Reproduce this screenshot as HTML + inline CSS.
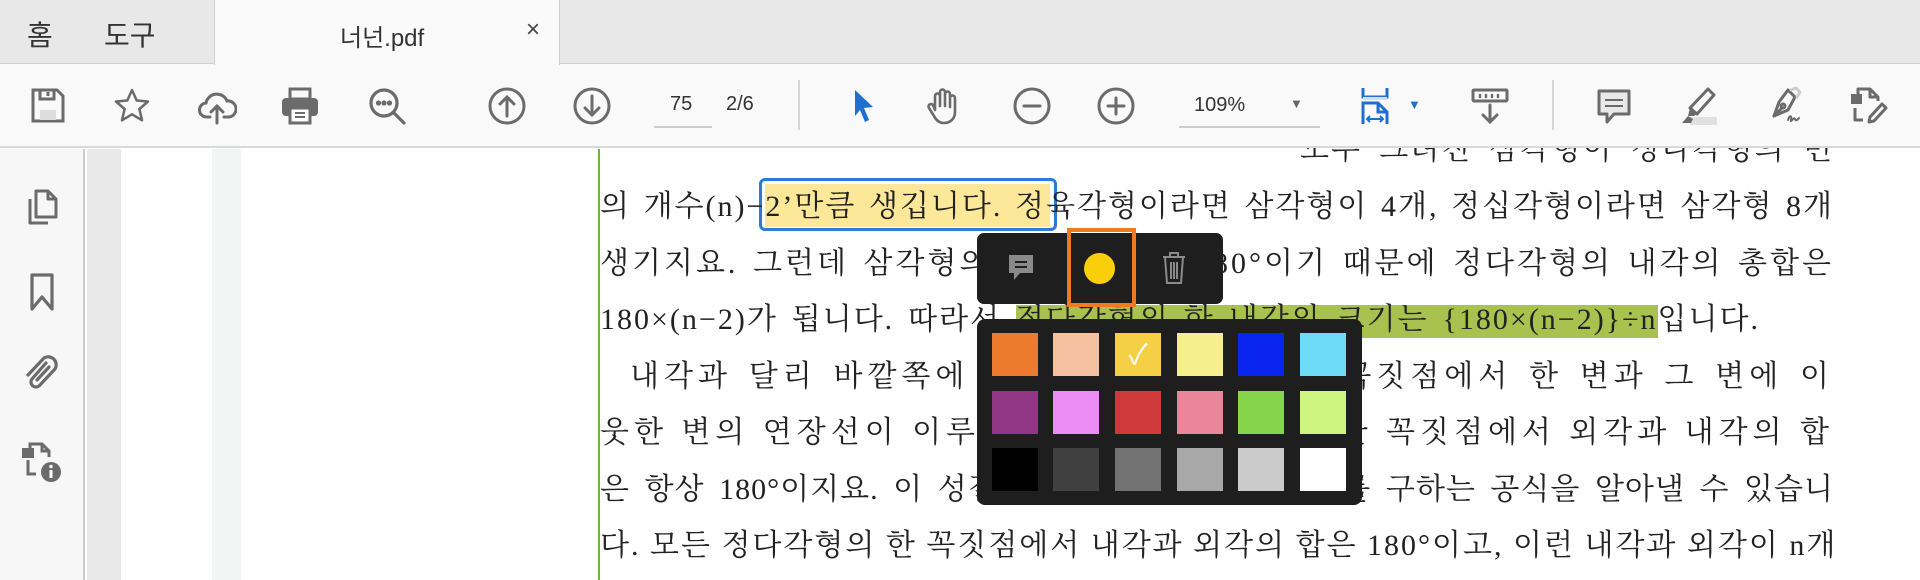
<!DOCTYPE html>
<html><head><meta charset="utf-8">
<style>
*{margin:0;padding:0;box-sizing:border-box}
body{width:1920px;height:580px;overflow:hidden;background:#fff;position:relative;font-family:"Liberation Sans","Noto Sans CJK KR",sans-serif}
.abs{position:absolute}
#tabs{left:0;top:0;width:1920px;height:64px;background:#e8e8e8;border-bottom:1px solid #cfcfcf;z-index:5}
#tb{left:0;top:64px;width:1920px;height:84px;background:#f9f9f9;border-bottom:2px solid #d9d9d9;z-index:5}
.z{z-index:6}
.ic{position:absolute;top:86px;width:40px;height:40px;z-index:6}
.ic svg{width:40px;height:40px}
.line{position:absolute;left:600px;width:1234px;white-space:nowrap;font-family:"Liberation Serif","Noto Serif CJK KR","Noto Serif CJK SC",serif;font-size:30px;color:#222;line-height:40px;text-align:justify;text-align-last:justify;letter-spacing:5px}
.sw{position:absolute;width:46px;height:43px}
</style></head><body>
<div id="tabs" class="abs"></div>
<div class="abs z" style="left:214px;top:0;width:346px;height:65px;background:#fafafa;border-left:1px solid #d0d0d0;border-right:1px solid #d0d0d0"></div>
<div class="abs z" style="left:27px;top:14px;font-size:28px;color:#333">홈</div>
<div class="abs z" style="left:104px;top:14px;font-size:28px;color:#333">도구</div>
<div class="abs z" style="left:340px;top:18px;font-size:24px;color:#333">너넌.pdf</div>
<div class="abs z" style="left:526px;top:16px;font-size:24px;color:#444">×</div>

<div id="tb" class="abs"></div>
<div class="ic" style="left:28px"><svg viewBox="0 0 40 40" fill="none" stroke="#6b6b6b" stroke-width="3"><path d="M5 4h24l6 6v25H5z"/><rect x="12" y="24" width="16" height="10" fill="#ddd" stroke="none"/><path d="M12 4v9h14V4M20 6v4"/></svg></div>
<div class="ic" style="left:112px"><svg viewBox="0 0 40 40" fill="none" stroke="#6b6b6b" stroke-width="2.5" stroke-linejoin="round"><path d="M20 4l4.7 10.5 11.3 1-8.6 7.5 2.6 11.3L20 28.3l-10 6 2.6-11.3L4 15.5l11.3-1z"/></svg></div>
<div class="ic" style="left:197px"><svg viewBox="0 0 40 40" fill="none" stroke="#6b6b6b" stroke-width="3" stroke-linecap="round"><path d="M13 31H10a7 7 0 0 1-1-14 11 11 0 0 1 21-2 7 7 0 0 1 2 16h-5"/><path d="M20 37V20M14 26l6-6 6 6"/></svg></div>
<div class="ic" style="left:280px"><svg viewBox="0 0 40 40"><rect x="10" y="3" width="20" height="10" fill="none" stroke="#6b6b6b" stroke-width="3"/><rect x="2" y="12" width="36" height="18" rx="4" fill="#6b6b6b"/><rect x="10" y="22" width="20" height="15" fill="#fff" stroke="#6b6b6b" stroke-width="3"/><path d="M15 27h10M15 31h10" stroke="#6b6b6b" stroke-width="2"/></svg></div>
<div class="ic" style="left:367px"><svg viewBox="0 0 40 40" fill="none" stroke="#6b6b6b" stroke-width="3.2" stroke-linecap="round"><circle cx="17" cy="17" r="13"/><path d="M27 27l10 10"/><circle cx="11.5" cy="17" r="1" fill="#6b6b6b"/><circle cx="17" cy="17" r="1" fill="#6b6b6b"/><circle cx="22.5" cy="17" r="1" fill="#6b6b6b"/></svg></div>
<div class="ic" style="left:487px"><svg viewBox="0 0 40 40" fill="none" stroke="#6b6b6b" stroke-width="3" stroke-linecap="round"><circle cx="20" cy="20" r="17"/><path d="M20 30V11M13 18l7-7 7 7"/></svg></div>
<div class="ic" style="left:572px"><svg viewBox="0 0 40 40" fill="none" stroke="#6b6b6b" stroke-width="3" stroke-linecap="round"><circle cx="20" cy="20" r="17"/><path d="M20 10v19M13 22l7 7 7-7"/></svg></div>
<div class="abs z" style="left:670px;top:93px;font-size:20px;color:#333">75</div>
<div class="abs z" style="left:654px;top:126px;width:58px;height:2px;background:#ccc"></div>
<div class="abs z" style="left:726px;top:93px;font-size:20px;color:#333">2/6</div>
<div class="abs z" style="left:798px;top:80px;width:2px;height:50px;background:#d5d5d5"></div>
<div class="ic" style="left:843px"><svg viewBox="0 0 40 40"><path d="M12 4l18 17-9 1 5 12-4 2-5-12-5 6z" fill="#1f6fd0"/></svg></div>
<div class="ic" style="left:923px"><svg viewBox="0 0 40 40" fill="none" stroke="#6b6b6b" stroke-width="2.6" stroke-linejoin="round"><path d="M12 24V10a2.5 2.5 0 0 1 5 0v10V6a2.5 2.5 0 0 1 5 0v14V8a2.5 2.5 0 0 1 5 0v13V12a2.5 2.5 0 0 1 5 0v14c0 7-5 11-11 11-5 0-8-3-10-7l-5-8a2.5 2.5 0 0 1 4-3z"/></svg></div>
<div class="ic" style="left:1012px"><svg viewBox="0 0 40 40" fill="none" stroke="#6b6b6b" stroke-width="3" stroke-linecap="round"><circle cx="20" cy="20" r="17"/><path d="M12 20h16"/></svg></div>
<div class="ic" style="left:1096px"><svg viewBox="0 0 40 40" fill="none" stroke="#6b6b6b" stroke-width="3" stroke-linecap="round"><circle cx="20" cy="20" r="17"/><path d="M12 20h16M20 12v16"/></svg></div>
<div class="abs z" style="left:1194px;top:94px;font-size:20px;color:#333">109%</div>
<div class="abs z" style="left:1290px;top:96px;font-size:13px;color:#666">▼</div>
<div class="abs z" style="left:1179px;top:126px;width:141px;height:2px;background:#ccc"></div>
<div class="ic" style="left:1359px"><svg viewBox="0 0 40 40" fill="none" stroke="#1f6fd0" stroke-width="3"><path d="M4 2v9h24V2"/><rect x="4" y="11" width="24" height="3" fill="#cfe0f5" stroke="none"/><path d="M4 38V17h15l9 9v12"/><path d="M19 17v9h9"/><path d="M9 33h14M11 30l-3 3 3 3M21 30l3 3-3 3" stroke-width="2"/></svg></div>
<div class="abs z" style="left:1408px;top:97px;font-size:13px;color:#1f6fd0">▼</div>
<div class="ic" style="left:1470px"><svg viewBox="0 0 40 40" fill="none" stroke="#6b6b6b" stroke-width="3" stroke-linecap="round"><rect x="3" y="4" width="34" height="11" rx="1"/><path d="M10 9v2M16 9v2M22 9v2M28 9v2" stroke-width="2.5"/><path d="M20 19v17M13 29l7 7 7-7"/></svg></div>
<div class="abs z" style="left:1552px;top:80px;width:2px;height:50px;background:#d5d5d5"></div>
<div class="ic" style="left:1594px"><svg viewBox="0 0 40 40"><path d="M5 5h30v23H20l-7 8v-8H5z" fill="#e9e9e9" stroke="#6b6b6b" stroke-width="3" stroke-linejoin="round"/><path d="M11 14h18M11 20h18" stroke="#6b6b6b" stroke-width="2"/></svg></div>
<div class="ic" style="left:1678px"><svg viewBox="0 0 40 40"><rect x="12" y="31" width="27" height="8" fill="#e0e0e0"/><path d="M30 3l6 6-17 19-7-6z" fill="none" stroke="#6b6b6b" stroke-width="3" stroke-linejoin="round"/><path d="M12 22l-2 8 6 0 3-2" fill="#6b6b6b"/><path d="M4 37l6-7 5 3-2 4z" fill="#6b6b6b"/></svg></div>
<div class="ic" style="left:1764px"><svg viewBox="0 0 40 40" fill="none" stroke="#6b6b6b" stroke-width="3" stroke-linejoin="round" stroke-linecap="round"><path d="M24 4l7 7-7 13-14 6 5-14z"/><path d="M10 30l8-8"/><circle cx="19" cy="20" r="2"/><path d="M27 4l5-2 4 4-3 5" stroke="#ccc"/><path d="M24 34c2-6 4-4 3 0s3-4 4-1 3 0 4-1" stroke-width="2"/></svg></div>
<div class="ic" style="left:1849px"><svg viewBox="0 0 40 40" fill="none" stroke="#6b6b6b" stroke-width="3" stroke-linejoin="round"><rect x="2" y="8" width="11" height="10" fill="#6b6b6b" stroke="none"/><path d="M9 8V3h12l8 8v4M21 3v8h8M6 22v12h8"/><path d="M33 18l4 4-12 13-5 1 1-5z"/></svg></div>

<!-- left sidebar -->
<div class="abs" style="left:0;top:149px;width:85px;height:431px;background:#f7f7f7;border-right:2px solid #ccc"></div>
<div class="abs" style="left:87px;top:149px;width:34px;height:431px;background:#e9e9e9"></div>
<div class="abs" style="left:212px;top:149px;width:29px;height:431px;background:#f3f4f4"></div>
<div class="ic" style="left:22px;top:187px"><svg viewBox="0 0 40 40" fill="none" stroke="#6b6b6b" stroke-width="3" stroke-linejoin="round"><path d="M8 12v24h18"/><path d="M14 4h12l8 8v18H14z"/><path d="M26 4v8h8"/></svg></div>
<div class="ic" style="left:22px;top:272px"><svg viewBox="0 0 40 40" fill="none" stroke="#6b6b6b" stroke-width="3.2" stroke-linejoin="round"><path d="M10 3h20v34l-10-12-10 12z"/></svg></div>
<div class="ic" style="left:22px;top:353px"><svg viewBox="0 0 40 40" fill="none" stroke="#6b6b6b" stroke-width="3.2" stroke-linecap="round"><path d="M24 10L10 26a5 5 0 0 0 7 7l16-17a8 8 0 0 0-11-11L6 22"/><path d="M27 14L15 27"/></svg></div>
<div class="ic" style="left:22px;top:442px"><svg viewBox="0 0 40 40"><rect x="0" y="6" width="12" height="10" fill="#6b6b6b"/><path d="M8 6V2h12l7 7v6M20 2v7h7M6 18v14h8" fill="none" stroke="#6b6b6b" stroke-width="3"/><circle cx="29" cy="30" r="10" fill="#6b6b6b"/><rect x="27.5" y="28" width="3" height="8" fill="#fff"/><circle cx="29" cy="24.5" r="1.8" fill="#fff"/></svg></div>

<!-- page -->
<div class="abs" style="left:598px;top:149px;width:2px;height:431px;background:#6bb547"></div>
<div class="abs" style="left:759px;top:178px;width:298px;height:53px;border:3px solid #2d7bd6;border-radius:6px"></div>
<div class="abs" style="left:765px;top:184px;width:285px;height:43px;background:#fde89a"></div>
<div class="abs" style="left:1016px;top:305px;width:642px;height:33px;background:#a9c24f"></div>

<div class="line" style="top:130px;left:1300px;width:534px;letter-spacing:2px">모두 그려진 삼각형이 정다각형의 변</div>
<div class="line" style="top:187px;letter-spacing:2px">의 개수(n)−2’만큼 생깁니다. 정육각형이라면 삼각형이 4개, 정십각형이라면 삼각형 8개</div>
<div class="line" style="top:244px;letter-spacing:3px">생기지요. 그런데 삼각형의 내각의 합은 180°이기 때문에 정다각형의 내각의 총합은</div>
<div class="line" style="top:300px;width:1160px;letter-spacing:2px">180×(n−2)가 됩니다. 따라서 정다각형의 한 내각의 크기는 {180×(n−2)}÷n입니다.</div>
<div class="line" style="top:357px;left:630px;width:1204px">내각과 달리 바깥쪽에 있는 외각은 다각형의 꼭짓점에서 한 변과 그 변에 이</div>
<div class="line" style="top:413px">웃한 변의 연장선이 이루는 각입니다. 다각형의 한 꼭짓점에서 외각과 내각의 합</div>
<div class="line" style="top:470px;letter-spacing:1px">은 항상 180°이지요. 이 성질을 이용하면 외각의 크기를 구하는 공식을 알아낼 수 있습니</div>
<div class="line" style="top:526px;letter-spacing:2px">다. 모든 정다각형의 한 꼭짓점에서 내각과 외각의 합은 180°이고, 이런 내각과 외각이 n개</div>

<!-- popup toolbar -->
<div class="abs" style="left:977px;top:233px;width:246px;height:71px;background:#1e1e1e;border-radius:7px"></div>
<svg class="abs" style="left:1007px;top:253px" width="28" height="32" viewBox="0 0 28 32"><path d="M2 2h24v18H13l-6 7v-7H2z" fill="#8a8a8a"/><path d="M8 9h12M8 14h12" stroke="#1e1e1e" stroke-width="2"/></svg>
<div class="abs" style="left:1067px;top:228px;width:69px;height:79px;border:4px solid #f07a22"></div>
<div class="abs" style="left:1084px;top:253px;width:31px;height:31px;border-radius:50%;background:#f8cf0a"></div>
<svg class="abs" style="left:1161px;top:251px" width="26" height="34" viewBox="0 0 26 34" fill="none" stroke="#8a8a8a" stroke-width="2"><path d="M2 6h22M9 6V2h8v4M4 6l2 26h14l2-26M10 11v17M13 11v17M16 11v17"/></svg>

<!-- palette -->
<div class="abs" style="left:977px;top:319px;width:385px;height:186px;background:#1e1e1e;border-radius:8px"></div>
<div class="sw" style="left:992px;top:333px;background:#ee7a2e"></div>
<div class="sw" style="left:1053px;top:333px;background:#f4c0a0"></div>
<div class="sw" style="left:1115px;top:333px;background:#f5cf46;color:#fff;font-size:28px;text-align:center;line-height:43px">✓</div>
<div class="sw" style="left:1177px;top:333px;background:#f7ef8e"></div>
<div class="sw" style="left:1238px;top:333px;background:#0a24ef"></div>
<div class="sw" style="left:1300px;top:333px;background:#6ddaf6"></div>
<div class="sw" style="left:992px;top:391px;background:#913785"></div>
<div class="sw" style="left:1053px;top:391px;background:#ea8cf3"></div>
<div class="sw" style="left:1115px;top:391px;background:#d0393a"></div>
<div class="sw" style="left:1177px;top:391px;background:#eb8599"></div>
<div class="sw" style="left:1238px;top:391px;background:#86d44a"></div>
<div class="sw" style="left:1300px;top:391px;background:#cff581"></div>
<div class="sw" style="left:992px;top:448px;background:#000"></div>
<div class="sw" style="left:1053px;top:448px;background:#404040"></div>
<div class="sw" style="left:1115px;top:448px;background:#727272"></div>
<div class="sw" style="left:1177px;top:448px;background:#a8a8a8"></div>
<div class="sw" style="left:1238px;top:448px;background:#cbcbcb"></div>
<div class="sw" style="left:1300px;top:448px;background:#fff"></div>
</body></html>
